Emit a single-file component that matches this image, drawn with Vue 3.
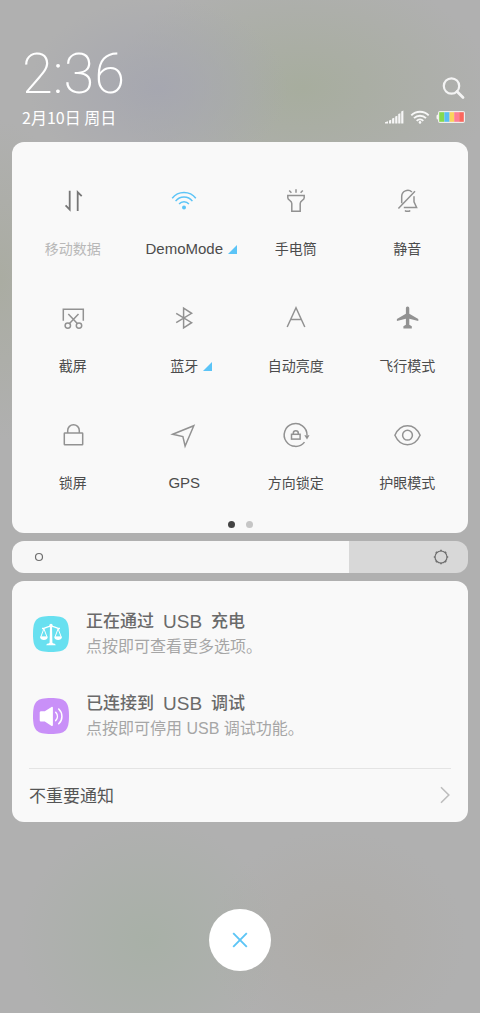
<script setup>
import { ref } from 'vue'

const tiles = [
  { id: 'data', label: '移动数据', muted: true },
  { id: 'wifi', label: 'DemoMode', latin: true, active: true, more: true },
  { id: 'torch', label: '手电筒' },
  { id: 'mute', label: '静音' },
  { id: 'shot', label: '截屏' },
  { id: 'bluetooth', label: '蓝牙', more: true },
  { id: 'auto', label: '自动亮度' },
  { id: 'plane', label: '飞行模式' },
  { id: 'lock', label: '锁屏' },
  { id: 'gps', label: 'GPS', latin: true },
  { id: 'rotate', label: '方向锁定' },
  { id: 'eye', label: '护眼模式' },
]

const brightness = ref(74)
</script>

<template>
  <main class="shade">
    <header class="top">
      <div class="when">
        <time class="clock">2:36</time>
        <span class="date">2月10日 周日</span>
      </div>
      <div class="side">
        <button class="search" type="button" aria-label="搜索">
          <svg width="24" height="24" viewBox="0 0 24 24" fill="none" stroke="#f4f4f4" stroke-width="2.200">
            <circle cx="10.500" cy="10" r="7.700" />
            <path d="M16 15.600l6 6" stroke-width="2.800" stroke-linecap="round" />
          </svg>
        </button>
        <div class="status">
          <svg width="19" height="14" viewBox="0 0 19 14" fill="#f6f6f6">
            <path d="M0 13.500v-1.200l3-1v2.200zM4 13.500v-3l2.200-.8v3.800zM7.100 13.500V8.600l2.200-.8v5.700zM10.200 13.500V6.500l2.200-.8v7.800zM13.200 13.500V4l2.200-.8v10.300zM16.200 13.500V1.400l2.200-.8v12.900z" />
          </svg>
          <svg width="20" height="14" viewBox="0 0 20 14" fill="none" stroke="#f8f8f8" stroke-width="1.900">
            <path d="M1.300 5.300a12.300 12.300 0 0 1 17.400 0M4 8.200a8.500 8.500 0 0 1 12 0M6.700 10.900a4.700 4.700 0 0 1 6.600 0" />
            <circle cx="10" cy="12.400" r="1.300" fill="#f8f8f8" stroke="none" />
          </svg>
          <svg width="29" height="14" viewBox="0 0 29 14">
            <path d="M2.500 4.500H2a1.500 1.500 0 0 0-1.500 1.500v2A1.500 1.500 0 0 0 2 9.500h.5z" fill="#f4f4f4" />
            <rect x="2" y="1" width="27" height="12" rx="2" fill="#f0eeee" />
            <rect x="3.200" y="2.200" width="5.200" height="9.600" fill="#85d94f" />
            <rect x="8.400" y="2.200" width="5.200" height="9.600" fill="#58bdf5" />
            <rect x="13.600" y="2.200" width="4.600" height="9.600" fill="#fad45c" />
            <rect x="18.200" y="2.200" width="5" height="9.600" fill="#ff7e94" />
            <rect x="23.200" y="2.200" width="4.600" height="9.600" fill="#fb675e" />
          </svg>
        </div>
      </div>
    </header>

    <section class="card toggles">
      <div class="grid">
        <button v-for="t in tiles" :key="t.id" type="button" class="tile" :class="{ muted: t.muted, active: t.active }">
          <svg class="glyph" viewBox="0 0 28 28">
            <g v-if="t.id === 'data'" class="strong">
              <path d="M10.700 3.700V22.600L6.600 18.400M18.700 24V5.100l4 4" />
            </g>
            <g v-else-if="t.id === 'wifi'">
              <path d="M2.200 11.300a15 15 0 0 1 23.600 0M5.600 14.100a10.600 10.600 0 0 1 16.800 0M9.100 17a6.300 6.300 0 0 1 9.800 0" />
              <circle class="solid" cx="14" cy="20.500" r="2" />
            </g>
            <g v-else-if="t.id === 'torch'">
              <path d="M5.800 8.500h16.400v2.300c0 2.900-4 2.300-4 5.600v7.900H9.800v-7.900c0-3.300-4-2.700-4-5.600zM14 2.300v3.400M7.200 3.500l2.200 2.200M20.800 3.500l-2.200 2.200" />
            </g>
            <g v-else-if="t.id === 'mute'">
              <path d="M8.700 16.300V9.500a6.100 6.100 0 0 1 10.200-4.500M21 9.200v5.600l2.600 5.700H10.800M5.400 21.500L22 4.200" />
              <path d="M12 23.400c1 1.200 4.200 1.200 5.200 0" />
            </g>
            <g v-else-if="t.id === 'shot'">
              <path d="M4.300 16.800V5.200h20v11.600M9.300 10l9 9.500M19.500 10l-9 9.500" />
              <circle cx="8.800" cy="21.600" r="2.700" />
              <circle cx="20" cy="21.600" r="2.700" />
            </g>
            <g v-else-if="t.id === 'bluetooth'">
              <path d="M6.200 9.300l15.400 9.400-8 5.100V4.200l8 5.100-15.400 9.400" />
            </g>
            <g v-else-if="t.id === 'auto'">
              <path d="M5.200 23L14 3.800 22.800 23M8.600 15.600h10.800" />
            </g>
            <g v-else-if="t.id === 'plane'">
              <path class="solid" d="M14.600 2.500c1.200 0 1.700.9 1.700 2.100v5.200l9 5.300v2l-9-2.300v6l2.500 1.500v2.200h-8.400v-2.200l2.500-1.500v-6l-9 2.300v-2l9-5.300V4.600c0-1.200.5-2.100 1.700-2.100z" />
            </g>
            <g v-else-if="t.id === 'lock'">
              <rect x="5.300" y="12" width="18.400" height="11.800" rx=".6" />
              <path d="M8.700 12V9.500a5.800 5.800 0 0 1 11.600 0V12" />
            </g>
            <g v-else-if="t.id === 'gps'">
              <path d="M2.700 13.200l21.100-8.500-8.700 20.400-2.200-9.500z" />
            </g>
            <g v-else-if="t.id === 'rotate'">
              <path d="M22.500 21.100a11.400 11.400 0 1 1 2.500-7.100" />
              <path class="solid" d="M22.300 14.200h5.200l-2.500 4.200z" />
              <rect x="9.500" y="13.300" width="8.600" height="4.800" />
              <path d="M11.300 13v-.8a2.500 2.500 0 0 1 5 0v.8" />
            </g>
            <g v-else>
              <path d="M1.900 14.200C4.600 8.200 9.200 4.700 14.500 4.700s9.900 3.500 12.600 9.500c-2.700 6-7.300 9.500-12.600 9.500S4.600 20.200 1.900 14.200z" />
              <circle cx="14.500" cy="14.200" r="4.900" />
            </g>
          </svg>
          <span class="label" :class="{ latin: t.latin }">
            {{ t.label }}
            <svg v-if="t.more" class="more" width="9" height="9" viewBox="0 0 9 9"><path d="M9 0v9H0z" fill="#5bc4f7" /></svg>
          </span>
        </button>
      </div>
      <div class="dots"><i class="dot on"></i><i class="dot"></i></div>
    </section>

    <div class="bright">
      <input v-model="brightness" type="range" min="0" max="100" aria-label="亮度" :style="{ '--level': brightness + '%' }" />
      <svg class="dim" width="10" height="10" viewBox="0 0 10 10" fill="none" stroke="#6e6e6e" stroke-width="1.200">
        <circle cx="5" cy="5" r="3.500" />
      </svg>
      <svg class="sun" width="16" height="16" viewBox="0 0 16 16" fill="none" stroke="#707070" stroke-width="1.200">
        <circle cx="8" cy="8" r="6" />
        <path stroke-width="1.700" d="M8 .8v1.400M8 13.800v1.400M.8 8h1.400M13.800 8h1.400M2.900 2.900L4 4M12 12l1.100 1.100M2.900 13.100L4 12M12 4l1.100-1.100" />
      </svg>
    </div>

    <section class="card notices">
      <article class="notice">
        <svg class="app" viewBox="0 0 36 36">
          <path fill="#68e0f0" d="M18 0c14.500 0 18 3.500 18 18s-3.500 18-18 18S0 32.500 0 18 3.500 0 18 0z" />
          <g fill="none" stroke="#fff" stroke-width="1" stroke-linejoin="round">
            <path d="M9 12.500c3 .3 4.600-2.200 9-2.200s6 2.500 9 2.200" stroke-width="1.300" />
            <path d="M10.900 12.700L7.800 21h6.200zM25.100 12.700L22 21h6.200z" />
          </g>
          <g fill="#fff">
            <circle cx="18" cy="9.400" r="1.700" />
            <path d="M7 20.700h7.800c-.2 4.400-7.600 4.400-7.800 0zM21.200 20.700H29c-.2 4.400-7.600 4.400-7.800 0zM17 10h2l.4 16.600c.3 1.200 3.100.8 3.300 2.700h-9.400c.2-1.900 3-1.500 3.300-2.700z" />
          </g>
        </svg>
        <div class="words">
          <h2>正在通过 <span class="usb">USB</span> 充电</h2>
          <p>点按即可查看更多选项。</p>
        </div>
      </article>
      <article class="notice">
        <svg class="app" viewBox="0 0 36 36">
          <path fill="#c990f8" d="M18 0c14.500 0 18 3.500 18 18s-3.500 18-18 18S0 32.500 0 18 3.500 0 18 0z" />
          <path fill="#fff" d="M8.200 13.200h3.600l6.800-4.300c.6-.4 1.300 0 1.300.7v17.600c0 .7-.7 1.100-1.300.7l-6.800-4.300H8.200c-1 0-1.500-.5-1.500-1.500v-7.400c0-1 .5-1.500 1.500-1.500z" />
          <path fill="none" stroke="#fff" stroke-width="1.500" stroke-linecap="round" d="M22.700 14.200c2.200 2.400 2.200 6 0 8.400M25.700 11c4.300 4 4.300 10.800 0 14.800" />
        </svg>
        <div class="words">
          <h2>已连接到 <span class="usb">USB</span> 调试</h2>
          <p>点按即可停用 USB 调试功能。</p>
        </div>
      </article>
      <button class="rest" type="button">
        <span>不重要通知</span>
        <svg width="12" height="18" viewBox="0 0 12 18" fill="none" stroke="#bdbdbd" stroke-width="1.600">
          <path d="M2 1.300L9.800 9 2 16.700" />
        </svg>
      </button>
    </section>

    <button class="close" type="button" aria-label="关闭">
      <svg width="16" height="16" viewBox="0 0 16 16" fill="none" stroke="#5cc5f6" stroke-width="1.900">
        <path d="M1.200 1.200l13.600 13.600M14.800 1.200L1.200 14.800" />
      </svg>
    </button>
  </main>
</template>

<style>
body {
  margin: 0;
}
</style>

<style scoped>
.shade {
  box-sizing: border-box;
  min-height: 100vh;
  padding: 0 12px 42px;
  display: flex;
  flex-direction: column;
  font-family: "Liberation Sans", "Noto Sans CJK SC", sans-serif;
  background:
    radial-gradient(ellipse 130px 90px at 33% 88px, #a6a7b0 0%, transparent 100%),
    radial-gradient(ellipse 190px 120px at 63% 88px, #a7ad9e 0%, transparent 100%),
    radial-gradient(ellipse 80px 160px at 0 280px, #aaaca2 0%, transparent 100%),
    radial-gradient(ellipse 130px 120px at 31% 940px, #a8b0a7 0%, transparent 100%),
    radial-gradient(ellipse 130px 110px at 70% 940px, #aeaca8 0%, transparent 100%),
    #b0b0b0;
}
svg {
  display: block;
  flex: none;
}
button {
  border: 0;
  padding: 0;
  background: none;
  font: inherit;
  color: inherit;
  cursor: pointer;
}
.top {
  display: flex;
  justify-content: space-between;
  align-items: flex-end;
  padding: 46px 3px 15px 10px;
  color: #fff;
}
.when {
  display: flex;
  flex-direction: column;
  gap: 5px;
}
.clock {
  font: 200 56px/56px Roboto, sans-serif;
}
.date {
  font-family: "Noto Sans CJK SC", sans-serif;
  font-size: 16px;
  line-height: 20px;
}
.side {
  display: flex;
  flex-direction: column;
  align-items: flex-end;
  gap: 7px;
}
.status {
  height: 20px;
  display: flex;
  align-items: center;
  gap: 6px;
}
.card {
  border-radius: 12px;
  background: #f9f9f9;
}
.toggles {
  padding: 45px 5px 5px;
}
.grid {
  display: grid;
  grid-template-columns: repeat(4, 1fr);
  row-gap: 45px;
}
.tile {
  display: flex;
  flex-direction: column;
  align-items: center;
  gap: 24px;
  color: #4c4c4c;
}
.muted {
  color: #b8b8b8;
}
.glyph {
  width: 28px;
  height: 28px;
  fill: none;
  stroke: #929292;
  stroke-width: 1.5px;
}
.glyph .strong {
  stroke: #777;
  stroke-width: 1.8px;
}
.glyph .solid {
  fill: #929292;
  stroke: none;
}
.active .glyph {
  stroke: #5bc4f7;
}
.active .glyph .solid {
  fill: #5bc4f7;
}
.label {
  position: relative;
  font-size: 14px;
  line-height: 20px;
}
.latin {
  font-size: 15px;
}
.more {
  position: absolute;
  left: calc(100% + 5px);
  bottom: 5px;
}
.dots {
  display: flex;
  justify-content: center;
  gap: 11px;
  margin-top: 28px;
}
.dot {
  width: 7px;
  height: 7px;
  border-radius: 50%;
  background: #c6c6c6;
}
.dot.on {
  background: #444;
}
.bright {
  position: relative;
  height: 32px;
  margin: 8px 0;
}
.bright input {
  appearance: none;
  display: block;
  width: 100%;
  height: 100%;
  margin: 0;
  border-radius: 12px;
  background: linear-gradient(to right, #f7f7f7 var(--level), #d8d8d8 var(--level));
}
.bright input::-webkit-slider-thumb {
  appearance: none;
  width: 1px;
  height: 32px;
  background: transparent;
}
.bright svg {
  position: absolute;
  top: 50%;
  transform: translateY(-50%);
  pointer-events: none;
}
.dim {
  left: 22px;
}
.sun {
  right: 19px;
}
.notices {
  padding: 28px 17px 0;
  display: flex;
  flex-direction: column;
}
.notice {
  display: flex;
  align-items: center;
  gap: 17px;
  padding-left: 4px;
}
.notice + .notice {
  margin-top: 32px;
}
.app {
  width: 36px;
  height: 36px;
}
h2,
p {
  margin: 0;
  font-weight: 400;
}
h2 {
  display: flex;
  gap: 9px;
  font-size: 17px;
  line-height: 26px;
  font-weight: 500;
  color: #6a6a6a;
}
.usb {
  font-size: 19px;
  font-weight: 400;
}
p {
  font-size: 16px;
  line-height: 24px;
  color: #a6a6a6;
}
.rest {
  display: flex;
  justify-content: space-between;
  align-items: center;
  height: 54px;
  margin-top: 27px;
  padding-bottom: 2px;
  border-top: 1px solid #e4e4e4;
  font-size: 17px;
  color: #555;
}
.close {
  width: 62px;
  height: 62px;
  margin: 87px auto 0;
  border-radius: 50%;
  background: #fff;
  display: grid;
  place-items: center;
}
</style>
